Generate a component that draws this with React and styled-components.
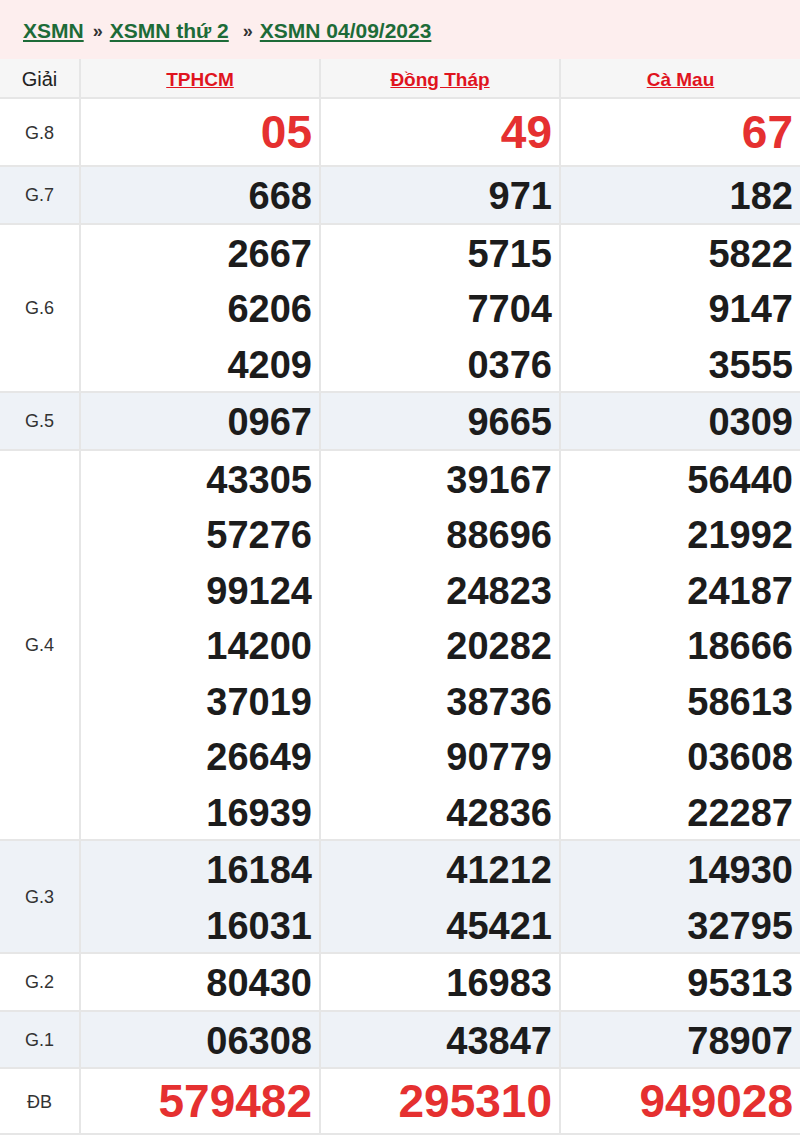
import React from "react";
import styled, { createGlobalStyle } from "styled-components";

const GlobalStyle = createGlobalStyle`
    body {
        margin: 0;
        background: #fff;
        font-family: "Liberation Sans", Arial, sans-serif;
    }
`;

const provinces = ["TPHCM", "Đồng Tháp", "Cà Mau"];

const rows = [
    { label: "G.8", big: true, values: [["05"], ["49"], ["67"]] },
    { label: "G.7", alt: true, values: [["668"], ["971"], ["182"]] },
    {
        label: "G.6",
        values: [
            ["2667", "6206", "4209"],
            ["5715", "7704", "0376"],
            ["5822", "9147", "3555"],
        ],
    },
    { label: "G.5", alt: true, values: [["0967"], ["9665"], ["0309"]] },
    {
        label: "G.4",
        values: [
            ["43305", "57276", "99124", "14200", "37019", "26649", "16939"],
            ["39167", "88696", "24823", "20282", "38736", "90779", "42836"],
            ["56440", "21992", "24187", "18666", "58613", "03608", "22287"],
        ],
    },
    {
        label: "G.3",
        alt: true,
        values: [
            ["16184", "16031"],
            ["41212", "45421"],
            ["14930", "32795"],
        ],
    },
    { label: "G.2", values: [["80430"], ["16983"], ["95313"]] },
    { label: "G.1", alt: true, values: [["06308"], ["43847"], ["78907"]] },
    { label: "ĐB", big: true, special: true, values: [["579482"], ["295310"], ["949028"]] },
];

const App = () => {
    return (
        <>
            <GlobalStyle />
            <Breadcrumb>
                <Crumb>XSMN</Crumb>
                <Sep>»</Sep>
                <Crumb>XSMN thứ 2</Crumb>
                <Sep $wide>»</Sep>
                <Crumb>XSMN 04/09/2023</Crumb>
            </Breadcrumb>
            <Table>
                <Row $head>
                    <HeadLabel>Giải</HeadLabel>
                    {provinces.map((p) => (
                        <HeadCell key={p}>
                            <Province>{p}</Province>
                        </HeadCell>
                    ))}
                </Row>
                {rows.map((r) => (
                    <Row key={r.label} $alt={r.alt}>
                        <Label>{r.label}</Label>
                        {r.values.map((col, i) => (
                            <NumCell key={i}>
                                {col.map((n) => (
                                    <Num key={n} $big={r.big} $tall={r.special ? 64 : r.big ? 66 : null}>
                                        {n}
                                    </Num>
                                ))}
                            </NumCell>
                        ))}
                    </Row>
                ))}
            </Table>
        </>
    );
};

const Breadcrumb = styled.div`
    display: flex;
    align-items: center;
    height: 59px;
    padding: 3px 0 0 23px;
    box-sizing: border-box;
    background: #fdeeee;
    font-size: 21px;
`;

const Crumb = styled.a`
    color: #1d6b38;
    font-weight: bold;
    text-decoration: underline;
    text-underline-offset: 2px;
    cursor: pointer;
`;

const Sep = styled.span`
    color: #333;
    font-weight: bold;
    font-size: 18px;
    margin: ${(p) => (p.$wide ? "0 7px 0 14px" : "0 7px 0 9px")};
`;

const Table = styled.div`
    display: flex;
    flex-direction: column;
    gap: 2px;
    background: #e6e6e6;
    padding-bottom: 2px;
`;

const Row = styled.div`
    display: grid;
    grid-template-columns: 79px 238px 238px 239px;
    column-gap: 2px;

    & > div {
        background: ${(p) => (p.$head ? "#f6f6f6" : p.$alt ? "#eef2f7" : "#fff")};
    }
`;

const HeadLabel = styled.div`
    height: 38px;
    padding-top: 3px;
    box-sizing: border-box;
    display: flex;
    align-items: center;
    justify-content: center;
    font-size: 20px;
    color: #222;
`;

const HeadCell = styled.div`
    height: 38px;
    padding-top: 3px;
    box-sizing: border-box;
    display: flex;
    align-items: center;
    justify-content: center;
`;

const Province = styled.a`
    color: #e0141e;
    font-size: 19px;
    font-weight: bold;
    text-decoration: underline;
    cursor: pointer;
`;

const Label = styled.div`
    display: flex;
    align-items: center;
    justify-content: center;
    padding-top: 2px;
    font-size: 18px;
    color: #333;
`;

const NumCell = styled.div`
    display: flex;
    flex-direction: column;
    padding-right: 7px;
    text-align: right;
`;

const Num = styled.div`
    height: ${(p) => (p.$tall ? `${p.$tall}px` : "55.5px")};
    box-sizing: border-box;
    padding-top: ${(p) => (p.$tall ? "0" : "3px")};
    line-height: ${(p) => (p.$tall ? `${p.$tall}px` : "52.5px")};
    font-size: ${(p) => (p.$big ? "46px" : "38px")};
    font-weight: bold;
    color: ${(p) => (p.$big ? "#e53030" : "#1c1c1c")};
`;

export default App;
